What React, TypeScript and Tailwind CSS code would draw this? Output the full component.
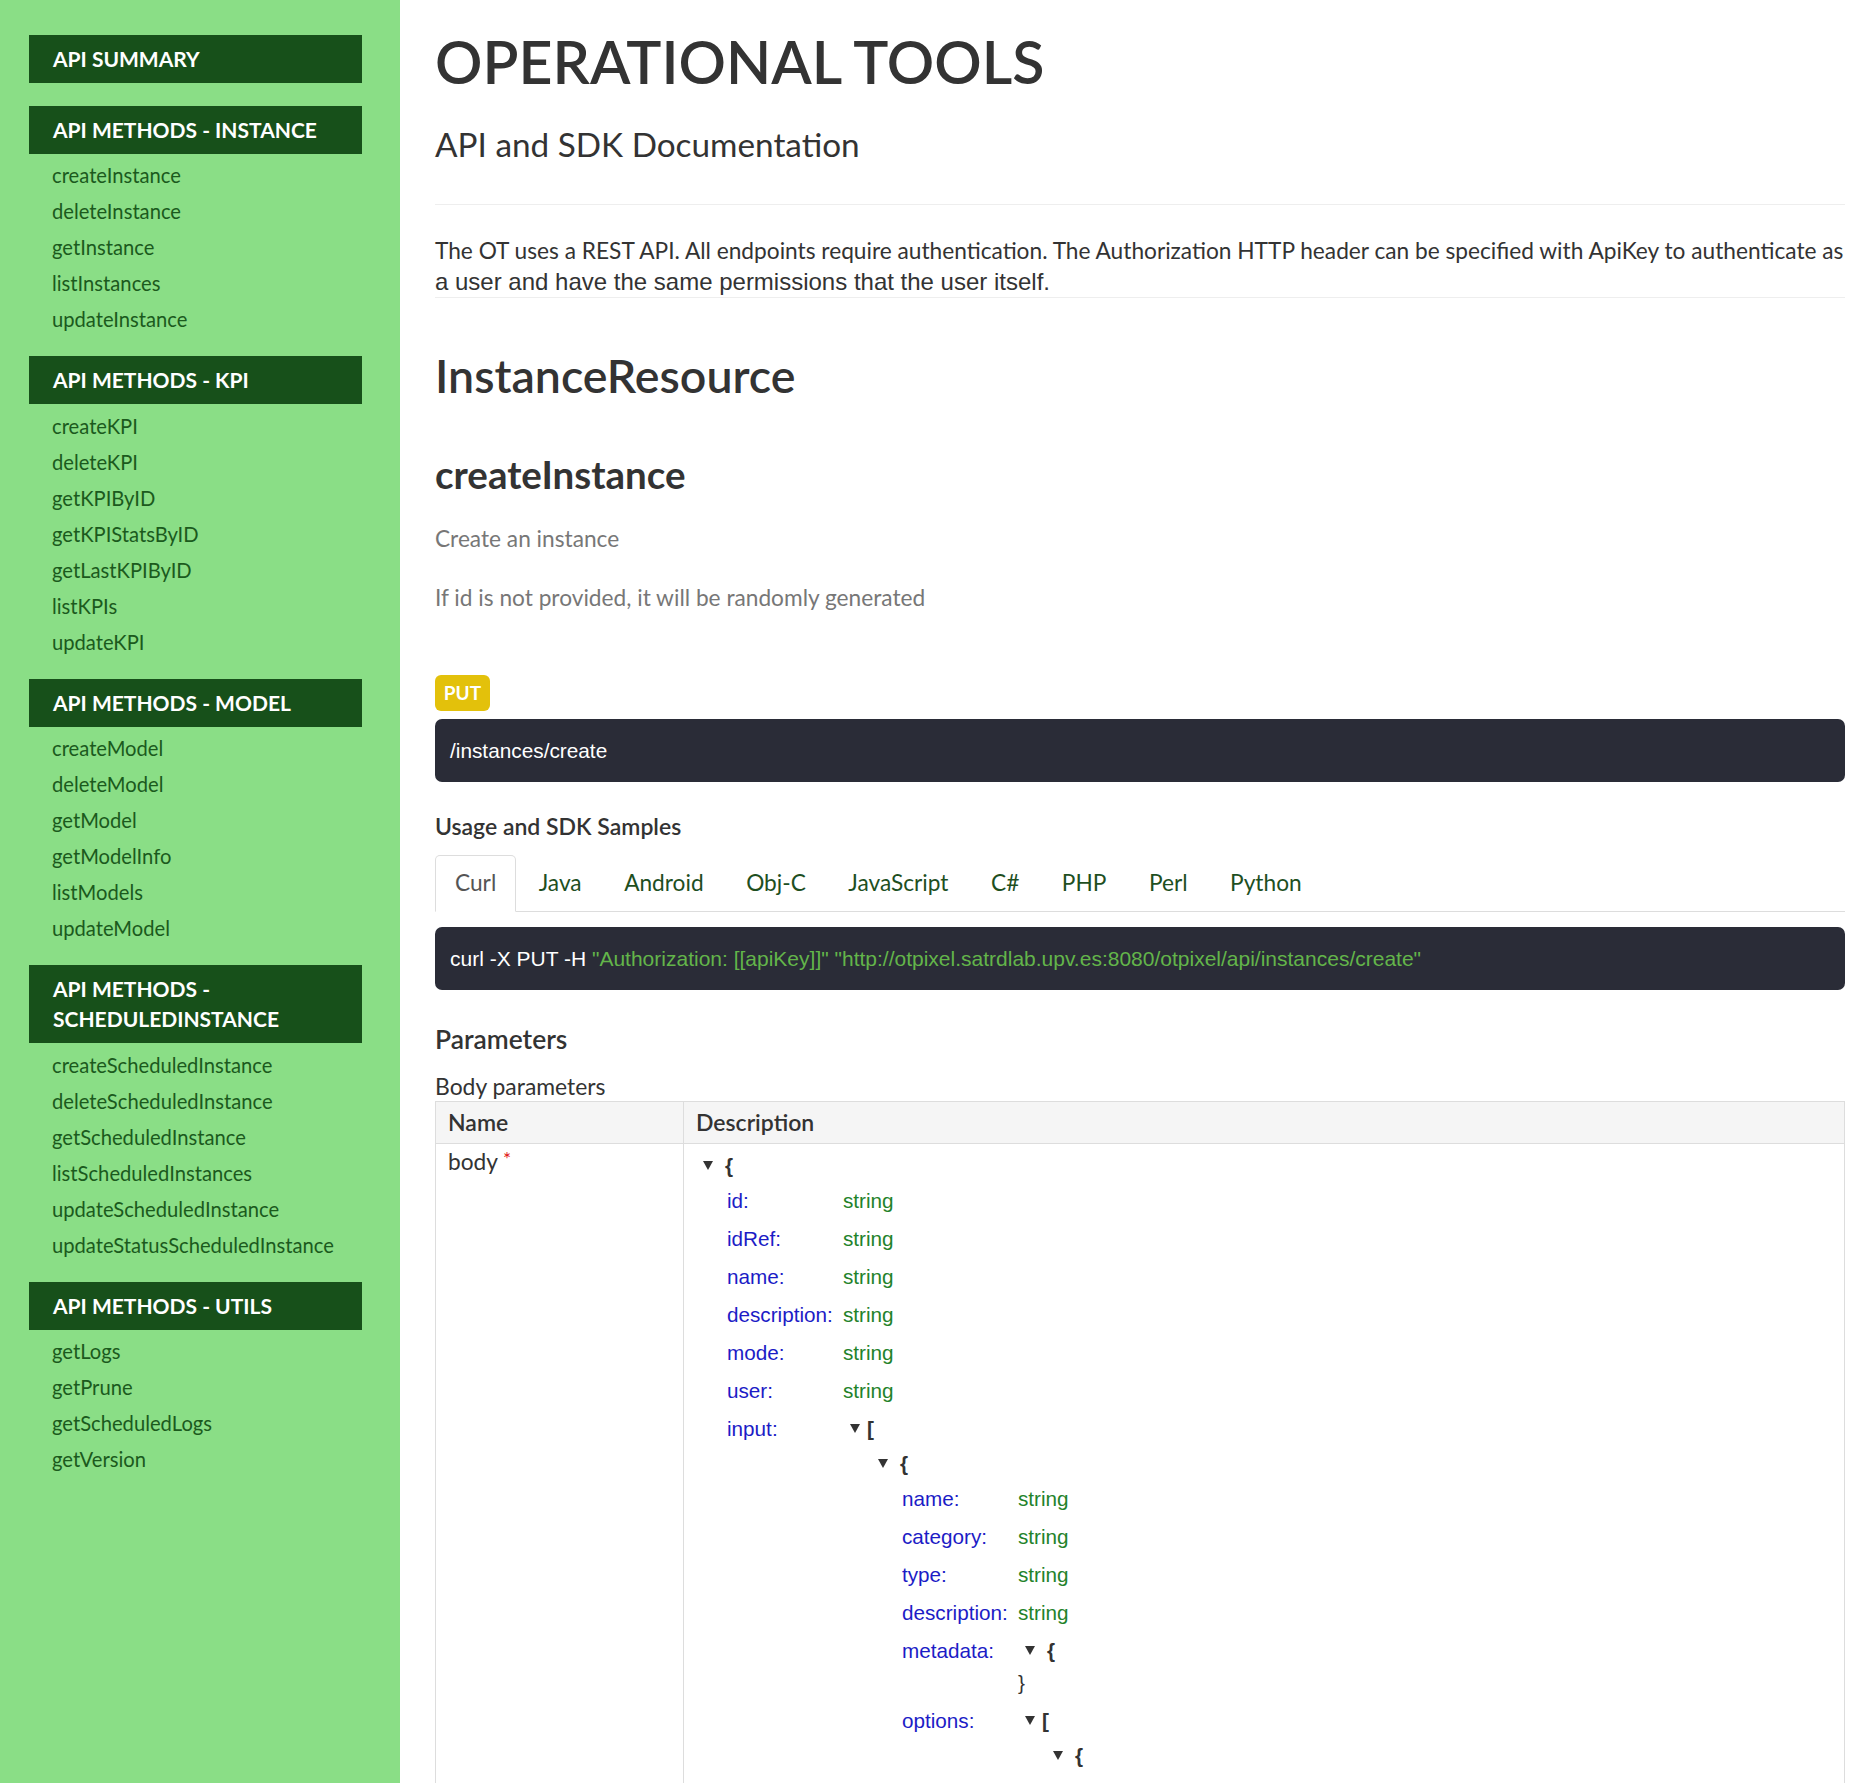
import React from "react";

type JNode =
  | { t: "s" }
  | { t: "o"; e: [string, JNode][] }
  | { t: "a"; c: JNode };

const S: JNode = { t: "s" };
const obj = (e: [string, JNode][]): JNode => ({ t: "o", e });
const arr = (c: JNode): JNode => ({ t: "a", c });

const root = obj([
  ["id", S],
  ["idRef", S],
  ["name", S],
  ["description", S],
  ["mode", S],
  ["user", S],
  [
    "input",
    arr(
      obj([
        ["name", S],
        ["category", S],
        ["type", S],
        ["description", S],
        ["metadata", obj([])],
        ["options", arr(obj([["name", S], ["value", S]]))],
      ])
    ),
  ],
  ["output", S],
]);

const sections: { title: string; items: string[] }[] = [
  { title: "API SUMMARY", items: [] },
  {
    title: "API METHODS - INSTANCE",
    items: ["createInstance", "deleteInstance", "getInstance", "listInstances", "updateInstance"],
  },
  {
    title: "API METHODS - KPI",
    items: ["createKPI", "deleteKPI", "getKPIByID", "getKPIStatsByID", "getLastKPIByID", "listKPIs", "updateKPI"],
  },
  {
    title: "API METHODS - MODEL",
    items: ["createModel", "deleteModel", "getModel", "getModelInfo", "listModels", "updateModel"],
  },
  {
    title: "API METHODS - SCHEDULEDINSTANCE",
    items: [
      "createScheduledInstance",
      "deleteScheduledInstance",
      "getScheduledInstance",
      "listScheduledInstances",
      "updateScheduledInstance",
      "updateStatusScheduledInstance",
    ],
  },
  { title: "API METHODS - UTILS", items: ["getLogs", "getPrune", "getScheduledLogs", "getVersion"] },
];

const tabs = ["Curl", "Java", "Android", "Obj-C", "JavaScript", "C#", "PHP", "Perl", "Python"];

function Toggle({ br }: { br: string }) {
  return (
    <span className="flex items-center">
      <svg width="10" height="9" viewBox="0 0 10 9" className="ml-[7px] shrink-0">
        <polygon points="0,0 10,0 5,9" fill="#333333" />
      </svg>
      <span className={(br === "{" ? "ml-[12px]" : "ml-[7px]") + " font-bold text-[#333333]"}>{br}</span>
    </span>
  );
}

function Closing({ br }: { br: string }) {
  return (
    <div className="h-[32px] flex items-start">
      <span className="leading-[26px] text-[#333333]">{br}</span>
    </div>
  );
}

function Entries({ e }: { e: [string, JNode][] }) {
  return (
    <div className="pl-[31px]">
      {e.map(([k, c]) => (
        <div key={k} className="flex">
          <div className="w-[116px] shrink-0 h-[38px] flex items-center text-[#1c1cc6]">{k}:</div>
          <div className="flex-1 min-w-0">
            <Value v={c} inline />
          </div>
        </div>
      ))}
    </div>
  );
}

function Value({ v, inline }: { v: JNode; inline?: boolean }) {
  if (v.t === "s") {
    return <div className="h-[38px] flex items-center text-[#23822a]">string</div>;
  }
  const rowH = inline ? "h-[38px]" : "h-[32px]";
  if (v.t === "o") {
    return (
      <div>
        <div className={rowH + " flex items-center"}>
          <Toggle br="{" />
        </div>
        <Entries e={v.e} />
        <Closing br="}" />
      </div>
    );
  }
  return (
    <div>
      <div className={rowH + " flex items-center"}>
        <Toggle br="[" />
      </div>
      <div className="pl-[28px]">
        <Value v={v.c} />
      </div>
      <Closing br="]" />
    </div>
  );
}

function RootObj({ v }: { v: JNode }) {
  if (v.t !== "o") return null;
  return (
    <div className="pt-[6px]">
      <div className="h-[32px] flex items-center">
        <Toggle br="{" />
      </div>
      <Entries e={v.e} />
    </div>
  );
}

export default function App() {
  return (
    <div className="w-[1869px] h-[1783px] overflow-hidden flex bg-white font-['Lato',sans-serif] text-[#333333]">
      {/* Sidebar */}
      <aside className="w-[400px] shrink-0 bg-[#8ade86] pt-[35px] pl-[29px] pr-[38px]">
        {sections.map((s) => (
          <div key={s.title}>
            <div className="bg-[#17501a] text-white font-bold text-[21px] leading-[30px] py-[9px] px-[24px]">
              {s.title}
            </div>
            <ul className="pt-[4px] pb-[18.5px]">
              {s.items.map((it) => (
                <li key={it} className="h-[36px] flex items-center pl-[23px] text-[20.2px] text-[#1b5a1d]">
                  {it}
                </li>
              ))}
            </ul>
          </div>
        ))}
      </aside>

      {/* Main */}
      <main className="flex-1 min-w-0 pl-[35px] pr-[24px] pt-[25px]">
        <h1 className="text-[59px] leading-[74px] font-semibold text-[#333333]">OPERATIONAL TOOLS</h1>
        <h2 className="mt-[27px] text-[33.3px] leading-[36px] font-normal text-[#333333]">API and SDK Documentation</h2>
        <div className="mt-[42px] h-px bg-[#eeeeee]" />

        <div className="mt-[31px]">
          <div className="text-[22.7px] leading-[30px] whitespace-nowrap text-[#333333]">
            The OT uses a REST API. All endpoints require authentication. The Authorization HTTP header can be specified with ApiKey to authenticate as
          </div>
          <div className="font-['Liberation_Sans',Arial,sans-serif] text-[24px] leading-[30px] pt-[1px] text-[#333333] whitespace-nowrap">
            a user and have the same permissions that the user itself.
          </div>
        </div>
        <div className="h-px bg-[#eeeeee]" />

        <h2 className="mt-[53px] text-[46.5px] leading-[48px] font-semibold text-[#333333]">InstanceResource</h2>
        <h3 className="mt-[57px] text-[38.5px] leading-[36px] font-bold text-[#333333]">createInstance</h3>
        <p className="mt-[32px] text-[22.7px] leading-[30px] text-[#777777]">Create an instance</p>
        <p className="mt-[29px] text-[22.7px] leading-[30px] text-[#777777]">
          If id is not provided, it will be randomly generated
        </p>

        <div className="mt-[62px] flex">
          <span className="h-[36px] w-[55px] flex items-center justify-center rounded-[6px] bg-[#e3c10b] text-white font-bold text-[19px]">
            PUT
          </span>
        </div>
        <div className="mt-[8px] h-[63px] rounded-[7px] bg-[#2a2c37] flex items-center pl-[15px] font-['Liberation_Sans',Arial,sans-serif] text-[20.8px] text-white">
          /instances/create
        </div>

        <h4 className="mt-[29px] text-[23px] leading-[30px] font-semibold text-[#333333]">Usage and SDK Samples</h4>

        <div className="mt-[14px] flex border-b border-[#dddddd]">
          {tabs.map((t, i) => (
            <div
              key={t}
              className={
                "-mb-px mr-[2.5px] h-[57px] px-[19px] flex items-center border rounded-t-[5px] text-[22.7px] " +
                (i === 0
                  ? "border-[#dddddd] border-b-transparent bg-white text-[#555555]"
                  : "border-transparent text-[#1e4f1f]")
              }
            >
              {t}
            </div>
          ))}
        </div>

        <div className="mt-[15px] h-[63px] rounded-[7px] bg-[#2a2c37] flex items-center pl-[15px] font-['Liberation_Sans',Arial,sans-serif] text-[21px] whitespace-nowrap">
          <span className="text-white">curl -X PUT -H&nbsp;</span>
          <span className="text-[#63b54a]">
            "Authorization: [[apiKey]]" "http://otpixel.satrdlab.upv.es:8080/otpixel/api/instances/create"
          </span>
        </div>

        <h3 className="mt-[33px] text-[26.4px] leading-[32px] font-semibold text-[#333333]">Parameters</h3>
        <div className="mt-[16px] text-[22.9px] leading-[30px] text-[#333333]">Body parameters</div>

        <div className="border border-[#dddddd]">
          <div className="flex h-[42px] bg-[#f5f5f5] border-b border-[#dddddd] text-[23px] font-semibold text-[#333333]">
            <div className="w-[248px] shrink-0 border-r border-[#dddddd] flex items-center pl-[12px]">Name</div>
            <div className="flex-1 flex items-center pl-[12px]">Description</div>
          </div>
          <div className="flex">
            <div className="w-[248px] shrink-0 border-r border-[#dddddd] pl-[12px] pt-[5px] text-[22.7px] leading-[26px] text-[#333333]">
              body
              <span className="ml-[5px] relative top-[-4px] text-[19px] text-[#e01010]">*</span>
            </div>
            <div className="flex-1 min-w-0 pl-[12px] font-['Liberation_Sans',Arial,sans-serif] text-[20.7px]">
              <RootObj v={root} />
            </div>
          </div>
        </div>
      </main>
    </div>
  );
}
